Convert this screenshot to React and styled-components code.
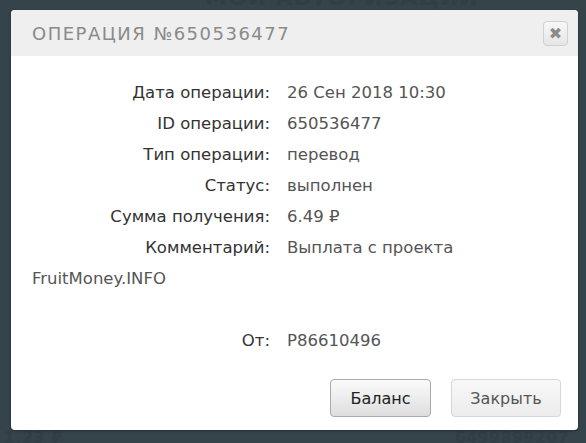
import React from 'react';
import styled, { createGlobalStyle } from 'styled-components';

const GlobalStyle = createGlobalStyle`
    html, body {
        margin: 0;
        padding: 0;
        background: #35434a;
        font-family: "DejaVu Sans", sans-serif;
    }
`;

const Page = styled.div`
    position: relative;
    width: 586px;
    height: 443px;
    overflow: hidden;
    background: #35434a;
`;

const Backdrop = styled.div`
    position: absolute;
    inset: 0;
    color: #313e45;
    font-family: "DejaVu Sans", sans-serif;
    font-weight: bold;
`;

const BackText = styled.span`
    position: absolute;
    left: ${({ x }) => x}px;
    top: ${({ y }) => y}px;
    font-size: ${({ size }) => size || 20}px;
    letter-spacing: 1px;
    white-space: nowrap;
`;

const Modal = styled.div`
    position: absolute;
    left: 11px;
    top: 10px;
    width: 567px;
    height: 420px;
    background: #fff;
    border-radius: 4px;
    box-shadow: 0 1px 3px rgba(0, 0, 0, 0.3);
    display: flex;
    flex-direction: column;
    overflow: hidden;
`;

const Header = styled.div`
    height: 46px;
    background: #efefef;
    display: flex;
    align-items: center;
    justify-content: space-between;
    padding: 0 10px 0 21px;
    box-sizing: border-box;
`;

const Title = styled.h3`
    margin: 0;
    font-family: "DejaVu Sans", sans-serif;
    font-weight: normal;
    font-size: 18px;
    letter-spacing: 1.5px;
    color: #8a8a8a;
    text-transform: uppercase;
`;

const CloseButton = styled.button`
    width: 25px;
    height: 25px;
    padding: 0;
    border: 1px solid #d0d0d0;
    border-radius: 4px;
    background: linear-gradient(#f7f7f7, #e6e6e6);
    color: #8c8c8c;
    font-family: "DejaVu Sans", sans-serif;
    font-weight: bold;
    font-size: 16px;
    line-height: 23px;
    display: flex;
    align-items: center;
    justify-content: center;
`;

const Body = styled.div`
    padding: 21px 22px 0 21px;
    font-size: 16.5px;
    line-height: 31px;
    color: #555;
`;

const Row = styled.div`
    min-height: 31px;
`;

const Label = styled.span`
    display: inline-block;
    width: 238px;
    margin-right: 17px;
    text-align: right;
    color: #333;
`;

const Footer = styled.div`
    margin-top: auto;
    display: flex;
    justify-content: flex-end;
    gap: 20px;
    padding: 0 17px 13px 0;
`;

const Button = styled.button`
    height: 38px;
    width: ${({ w }) => w}px;
    border-radius: 4px;
    border: 1px solid ${({ primary }) => (primary ? '#a9a9a9' : '#d6d6d6')};
    background: ${({ primary }) =>
        primary ? 'linear-gradient(#fbfbfb, #dedede)' : 'linear-gradient(#f8f8f8, #ececec)'};
    color: ${({ primary }) => (primary ? '#222' : '#555')};
    font-family: "DejaVu Sans", sans-serif;
    font-size: 16px;
    padding: 0;
`;

const rows = [
    ['Дата операции:', '26 Сен 2018 10:30'],
    ['ID операции:', '650536477'],
    ['Тип операции:', 'перевод'],
    ['Статус:', 'выполнен'],
    ['Сумма получения:', '6.49 ₽'],
    ['Комментарий:', 'Выплата с проекта FruitMoney.INFO'],
    ['', ''],
    ['От:', 'P86610496'],
];

const App = () => {
    return (
        <Page>
            <GlobalStyle />
            <Backdrop>
                <BackText x={205} y={-15} size={22}>МОИ АВТОРИЗАЦИИ</BackText>
                <BackText x={4} y={429} size={15}>1.23 ₽</BackText>
                <BackText x={455} y={429} size={15}>6499899207</BackText>
            </Backdrop>
            <Modal>
                <Header>
                    <Title>Операция №650536477</Title>
                    <CloseButton>✖</CloseButton>
                </Header>
                <Body>
                    {rows.map(([label, value], i) => (
                        <Row key={i}>
                            {label && <Label>{label}</Label>}
                            {value}
                        </Row>
                    ))}
                </Body>
                <Footer>
                    <Button primary w={101}>Баланс</Button>
                    <Button w={110}>Закрыть</Button>
                </Footer>
            </Modal>
        </Page>
    );
};

export default App;
